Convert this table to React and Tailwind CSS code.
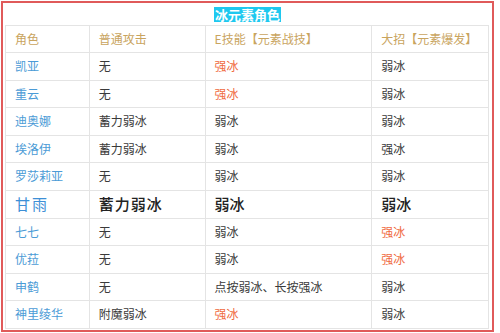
import React from "react";

const rows = [
    { name: "凯亚", normal: "无", skill: ["强冰", true], burst: ["弱冰", false] },
    { name: "重云", normal: "无", skill: ["强冰", true], burst: ["弱冰", false] },
    { name: "迪奥娜", normal: "蓄力弱冰", skill: ["弱冰", false], burst: ["弱冰", false] },
    { name: "埃洛伊", normal: "蓄力弱冰", skill: ["弱冰", false], burst: ["强冰", false] },
    { name: "罗莎莉亚", normal: "无", skill: ["弱冰", false], burst: ["弱冰", false] },
    { name: "甘雨", normal: "蓄力弱冰", skill: ["弱冰", false], burst: ["弱冰", false], big: true },
    { name: "七七", normal: "无", skill: ["弱冰", false], burst: ["强冰", true] },
    { name: "优菈", normal: "无", skill: ["弱冰", false], burst: ["强冰", true] },
    { name: "申鹤", normal: "无", skill: ["点按弱冰、长按强冰", false], burst: ["弱冰", false] },
    { name: "神里绫华", normal: "附魔弱冰", skill: ["强冰", true], burst: ["弱冰", false] },
];

function Cell({ children, className = "" }) {
    return (
        <td className={`border border-[#e4e4e4] pl-[9px] align-middle ${className}`}>
            {children}
        </td>
    );
}

export default function App() {
    return (
        <div
            className="w-[500px] h-[333px] bg-white pl-[1px] pt-[1px]"
            style={{ fontFamily: '"Noto Sans CJK SC", "Noto Sans", sans-serif' }}
        >
            <div className="w-[493px] h-[331px] border-2 border-[#e05a5a] px-[2px] pb-[2px]">
                {/* Title */}
                <div className="h-[22px] flex items-center justify-center">
                    <span className="bg-[#1ec8ef] text-white font-bold text-[13px] leading-[15px] px-[1px]">
                        冰元素角色
                    </span>
                </div>

                <table className="w-[484px] border-collapse text-[12px] text-[#3a3a3a]">
                    <colgroup>
                        <col className="w-[84px]" />
                        <col className="w-[116px]" />
                        <col className="w-[167px]" />
                        <col className="w-[117px]" />
                    </colgroup>
                    <thead>
                        <tr className="h-[27px] text-[#c9a45e]">
                            <Cell>角色</Cell>
                            <Cell>普通攻击</Cell>
                            <Cell>E技能【元素战技】</Cell>
                            <Cell>大招【元素爆发】</Cell>
                        </tr>
                    </thead>
                    <tbody>
                        {rows.map((r) => (
                            <tr
                                key={r.name}
                                className={r.big ? "h-[28px] text-[15px] font-medium text-[#222]" : "h-[27.5px]"}
                            >
                                <Cell className={r.big ? "text-[#3d8fd6] font-normal tracking-[2px]" : "text-[#4b9bd6]"}>
                                    {r.name}
                                </Cell>
                                <Cell className={r.big ? "tracking-[1px]" : ""}>{r.normal}</Cell>
                                <Cell className={r.skill[1] ? "text-[#f06b3f]" : ""}>{r.skill[0]}</Cell>
                                <Cell className={r.burst[1] ? "text-[#f06b3f]" : ""}>{r.burst[0]}</Cell>
                            </tr>
                        ))}
                    </tbody>
                </table>
            </div>
        </div>
    );
}
